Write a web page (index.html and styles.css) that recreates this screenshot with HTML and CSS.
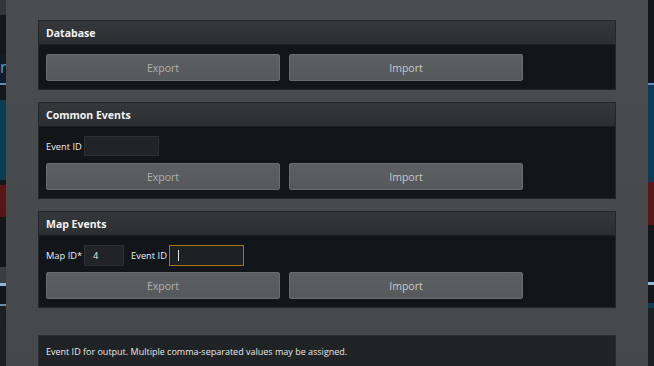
FILE: index.html
```html
<!DOCTYPE html>
<html>
<head>
<meta charset="utf-8">
<link rel="stylesheet" href="styles.css">
</head>
<body>
<div class="screen">
  <div class="strip strip-left">
    <div class="s s-top h15"></div>
    <div class="s s-dark h40"></div>
    <div class="s s-blue h28"><span class="glyph">r</span></div>
    <div class="s s-line2"></div>
    <div class="s s-dark h15"></div>
    <div class="s s-teal h80"></div>
    <div class="s s-dark h5"></div>
    <div class="s s-red h32"></div>
    <div class="s s-dark h50"></div>
    <div class="s s-gray h16"></div>
    <div class="s s-line"></div>
    <div class="s s-dark h18"></div>
    <div class="s s-line2"></div>
    <div class="s s-dark2 fill"></div>
  </div>
  <div class="modal">
    <section class="panel">
      <div class="panel-head">Database</div>
      <div class="panel-body">
        <div class="btn-row">
          <button class="btn btn-export">Export</button>
          <button class="btn btn-import">Import</button>
        </div>
      </div>
    </section>
    <section class="panel">
      <div class="panel-head">Common Events</div>
      <div class="panel-body">
        <div class="field-row">
          <label class="lbl">Event ID</label>
          <div class="inp inp-wide"></div>
        </div>
        <div class="btn-row">
          <button class="btn btn-export">Export</button>
          <button class="btn btn-import">Import</button>
        </div>
      </div>
    </section>
    <section class="panel">
      <div class="panel-head">Map Events</div>
      <div class="panel-body body-map">
        <div class="field-row row-map">
          <label class="lbl">Map ID*</label>
          <div class="inp inp-narrow">4</div>
          <label class="lbl lbl-next">Event ID</label>
          <div class="inp inp-wide inp-focus"><span class="caret"></span></div>
        </div>
        <div class="btn-row">
          <button class="btn btn-export">Export</button>
          <button class="btn btn-import">Import</button>
        </div>
      </div>
    </section>
    <div class="info">Event ID for output. Multiple comma-separated values may be assigned.</div>
  </div>
  <div class="strip strip-right">
    <div class="s s-dark h83"></div>
    <div class="s s-line2"></div>
    <div class="s s-teal h97"></div>
    <div class="s s-red h43"></div>
    <div class="s s-dark h57"></div>
    <div class="s s-line"></div>
    <div class="s s-dark h18"></div>
    <div class="s s-teal h5"></div>
    <div class="s s-dark2 fill"></div>
  </div>
</div>
</body>
</html>
```
FILE: styles.css
```css
html, body {
  margin: 0;
  padding: 0;
  width: 654px;
  height: 366px;
  overflow: hidden;
  background: #1b1d1f;
  font-family: "Open Sans", "Noto Sans", "Liberation Sans", sans-serif;
}
.screen {
  display: flex;
  width: 654px;
  height: 366px;
}
.strip {
  width: 6px;
  display: flex;
  flex-direction: column;
  overflow: hidden;
  background: #16181a;
}
.s { width: 100%; flex: none; position: relative; }
.s-top { background: #34373a; }
.s-dark { background: #141619; }
.s-dark2 { background: #1d2022; }
.s-blue { background: #101d29; }
.s-teal { background: #0d3a55; }
.s-red { background: #5b1519; }
.s-gray { background: #3b3e41; }
.s-line { height: 3px; background: #8fb7d6; }
.s-line2 { height: 2px; background: #5f8fae; }
.h5 { height: 5px; }
.h15 { height: 15px; }
.h16 { height: 16px; }
.h18 { height: 18px; }
.h28 { height: 28px; }
.h32 { height: 32px; }
.h40 { height: 40px; }
.h43 { height: 43px; }
.h50 { height: 50px; }
.h57 { height: 57px; }
.h80 { height: 80px; }
.h83 { height: 83px; }
.h97 { height: 97px; }
.fill { flex: 1; }
.glyph {
  position: absolute;
  left: 0;
  top: 2px;
  color: #4aa3e0;
  font-size: 16px;
  line-height: 20px;
}
.modal {
  flex: 1;
  background: linear-gradient(#4a4d50, #45484b);
  padding: 20px 32px 0 32px;
  display: flex;
  flex-direction: column;
  gap: 12px;
  overflow: hidden;
}
.panel {
  width: 578px;
  border: 1px solid #24272a;
  box-sizing: border-box;
  background: #12161a;
  flex: none;
}
.panel-head {
  height: 24px;
  box-sizing: border-box;
  background: linear-gradient(#35383b, #2c2f32);
  color: #f2f2f2;
  font-weight: 700;
  font-size: 10.5px;
  line-height: 24px;
  padding-left: 7px;
  border-bottom: 1px solid #1c1f22;
}
.panel-body {
  padding: 9px 7px 8px 7px;
  display: flex;
  flex-direction: column;
  gap: 7px;
}
.body-map { gap: 6px; }
.btn-row {
  display: flex;
  gap: 9px;
}
.btn {
  width: 234px;
  height: 27px;
  box-sizing: border-box;
  border: 1px solid #6b6e71;
  border-radius: 2px;
  background: linear-gradient(#5d6063, #56595c);
  font-family: inherit;
  font-size: 10.5px;
  padding: 0;
  margin: 0;
}
.btn-export { color: #aeb1b3; }
.btn-import { color: #c6c8ca; }
.field-row {
  display: flex;
  align-items: center;
  height: 20px;
}
.row-map { height: 21px; }
.lbl {
  color: #f0f0f0;
  font-size: 9.3px;
  margin-right: 2px;
}
.lbl-next { margin-left: 7px; margin-right: 2px; }
.inp {
  height: 20px;
  box-sizing: border-box;
  background: #202427;
  border: 1px solid #2d3134;
  color: #e6e6e6;
  font-size: 9.3px;
  line-height: 18px;
  padding-left: 8px;
  display: flex;
  align-items: center;
}
.inp-wide { width: 75px; }
.inp-narrow { width: 40px; height: 21px; }
.inp.inp-focus {
  height: 21px;
  border: 1px solid #a37618;
  background: #1e2124;
}
.caret {
  width: 1px;
  height: 11px;
  background: #e8e8e8;
}
.info {
  margin-top: 15px;
  flex: 1;
  background: #202326;
  border: 1px solid #2a2d30;
  color: #e8e8e8;
  font-size: 9px;
  padding: 9px 7px;
}
```
